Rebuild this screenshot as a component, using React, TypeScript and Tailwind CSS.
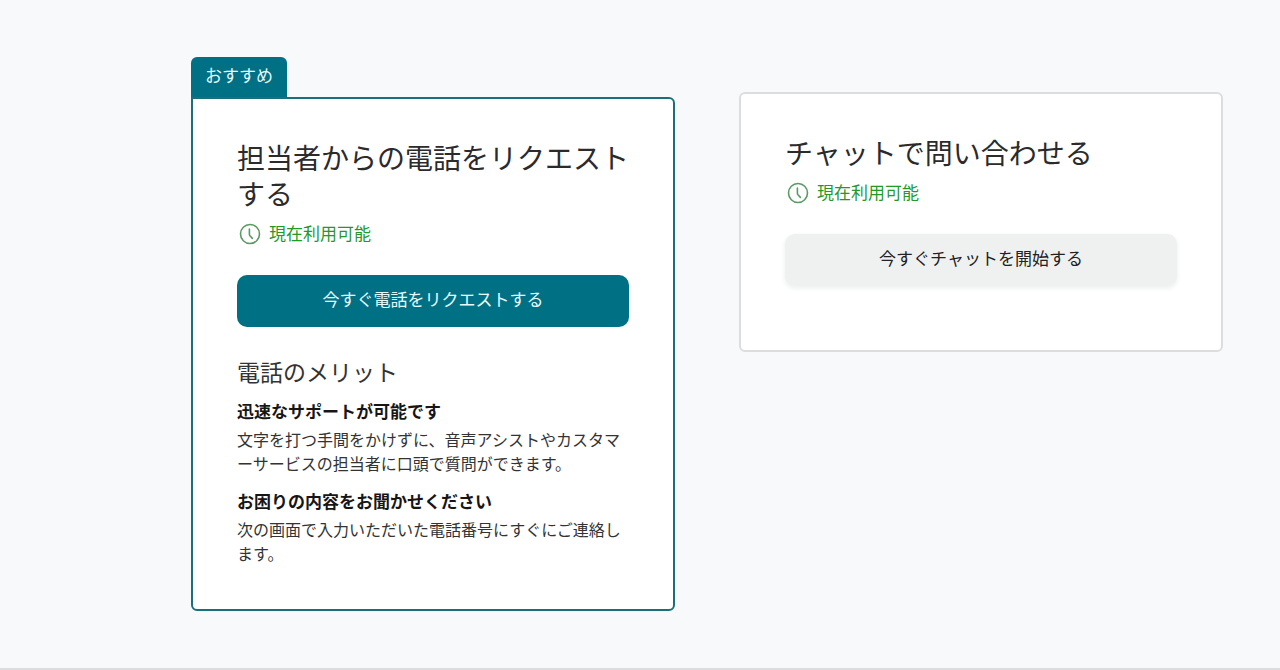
import type { ReactNode } from "react";

function ClockIcon() {
  return (
    <svg
      className="size-[22px] shrink-0"
      viewBox="0 0 22 22"
      fill="none"
      stroke="#5b9a63"
      strokeLinecap="round"
      strokeLinejoin="round"
      aria-hidden="true"
    >
      <circle cx="11" cy="11" r="9.5" strokeWidth="1.6" />
      <path d="M10.4 6v5.2c0 .8.3 1.2.8 1.8l2.2 2.4" strokeWidth="1.6" />
    </svg>
  );
}

function Availability() {
  return (
    <p className="mt-2.5 flex items-center gap-2 pl-0.5 text-[17px] leading-6 text-[#219a28]">
      <span className="flex pt-0.5">
        <ClockIcon />
      </span>
      現在利用可能
    </p>
  );
}

function Title({ children }: { children: ReactNode }) {
  return <h2 className="text-[28px] leading-9 font-normal text-[#2b2b2b]">{children}</h2>;
}

function Merit({ title, children }: { title: string; children: ReactNode }) {
  return (
    <section>
      <h4 className="text-[17px] leading-6 font-bold text-[#161616]">{title}</h4>
      <p className="mt-1 text-base leading-6 text-[#333333]">{children}</p>
    </section>
  );
}

export default function App() {
  return (
    <main
      lang="ja"
      className="grid min-h-screen grid-cols-2 items-start gap-16 border-b-2 border-[#dadcdd] bg-[#f7f9fb] pt-[57px] pr-[57px] pb-14 pl-[191px] font-['Noto_Sans_CJK_JP',sans-serif] [line-break:loose]"
    >
      <div className="min-w-0">
        <div className="w-fit rounded-t-md bg-[#007185] px-3.5 pt-1.5 pb-2.5 text-[17px] leading-6 text-[#e6fbff]">
          おすすめ
        </div>
        <article className="rounded-md rounded-tl-none border-2 border-[#1b6f7b] bg-white px-11 pt-10 pb-11">
          <Title>担当者からの電話をリクエストする</Title>
          <Availability />
          <button
            type="button"
            className="mt-[30px] block w-full rounded-[10px] bg-[#007185] pt-3 pb-4 text-[17px] leading-6 text-[#e6fbff]"
          >
            今すぐ電話をリクエストする
          </button>
          <h3 className="mt-7 text-[23px] leading-8 text-[#333333]">電話のメリット</h3>
          <div className="mt-3 flex flex-col gap-3.5">
            <Merit title="迅速なサポートが可能です">
              文字を打つ手間をかけずに、音声アシストやカスタマーサービスの担当者に口頭で質問ができます。
            </Merit>
            <Merit title="お困りの内容をお聞かせください">
              次の画面で入力いただいた電話番号にすぐにご連絡します。
            </Merit>
          </div>
        </article>
      </div>

      <article className="mt-[35px] min-w-0 rounded-md border-2 border-[#dcdddf] bg-white px-11 pt-10 pb-16">
        <Title>チャットで問い合わせる</Title>
        <Availability />
        <button
          type="button"
          className="mt-[30px] block w-full rounded-[10px] bg-[#eff1f1] pt-3 pb-4 text-[17px] leading-6 text-[#222222] shadow-[0_2px_4px_1px_#f0f2f2]"
        >
          今すぐチャットを開始する
        </button>
      </article>
    </main>
  );
}
